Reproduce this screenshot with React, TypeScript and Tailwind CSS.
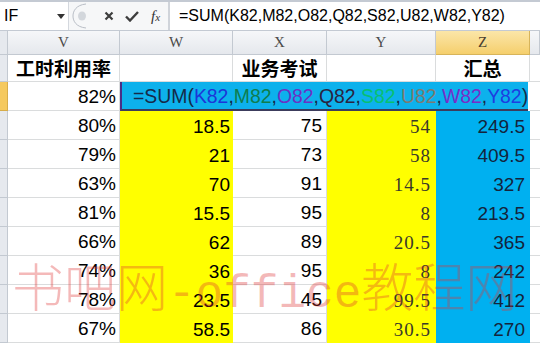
import React from 'react';

const DATA: string[][] = [
  ['80%', '18.5', '75', '54', '249.5'],
  ['79%', '21', '73', '58', '409.5'],
  ['63%', '70', '91', '14.5', '327'],
  ['81%', '15.5', '95', '8', '213.5'],
  ['66%', '62', '89', '20.5', '365'],
  ['74%', '36', '95', '8', '242'],
  ['78%', '23.5', '45', '99.5', '412'],
  ['67%', '58.5', '86', '30.5', '270'],
];

// colour per reference in the formula (on the blue edit box)
const REFS: { t: string; c: string }[] = [
  { t: 'K82', c: 'text-[#1c36d8]' },
  { t: 'M82', c: 'text-[#0f7d4e]' },
  { t: 'O82', c: 'text-[#6a32c4]' },
  { t: 'Q82', c: 'text-[#2a2440]' },
  { t: 'S82', c: 'text-[#08c070]' },
  { t: 'U82', c: 'text-[#7d7a70]' },
  { t: 'W82', c: 'text-[#7a2cc8]' },
  { t: 'Y82', c: 'text-[#1e3ee0]' },
];

const whiteCell = 'border-r border-b border-[#dadcdd] bg-white flex items-center justify-end pt-[3px]';

function FormulaBar() {
  return (
    <div className="h-[31px] flex border-t-[2px] border-b border-[#c4cad3] bg-[#eef0f3] text-[16px] text-black">
      {/* name box */}
      <div className="w-[69px] bg-white flex items-center pl-[4px] pr-[3px] border-r border-[#d4d8de]">
        <span className="flex-1 leading-none">IF</span>
        <svg width="8" height="5" viewBox="0 0 8 5">
          <path d="M0 0 L8 0 L4 5 Z" fill="#333" />
        </svg>
      </div>
      {/* buttons */}
      <div className="w-[99px] bg-[#f6f7f8] flex items-center">
        <svg width="16" height="26" viewBox="0 0 16 26" className="ml-[3px]">
          <path d="M14 1 C4 2 1 8 1 13 C1 18 4 24 14 25" fill="none" stroke="#b9bec6" strokeWidth="1" />
          <ellipse cx="10" cy="13" rx="4" ry="4.5" fill="#d3d7dc" />
        </svg>
        <svg width="10" height="10" viewBox="0 0 10 10" className="ml-[16px]">
          <path d="M1.5 1.5 L8.5 8.5 M8.5 1.5 L1.5 8.5" stroke="#3d3d3d" strokeWidth="2.2" />
        </svg>
        <svg width="14" height="11" viewBox="0 0 14 11" className="ml-[11px]">
          <path d="M1 5.5 L5 9.5 L13 1" fill="none" stroke="#3d3d3d" strokeWidth="2.4" />
        </svg>
        <span className="ml-[12px] font-['Liberation_Serif',serif] italic text-[#333] text-[15px] leading-none">
          f<span className="text-[11px]">x</span>
        </span>
      </div>
      <div className="w-[2px] bg-[#d0d4da]" />
      {/* formula */}
      <div className="flex-1 bg-white flex items-center pl-[9px] font-['Liberation_Sans',sans-serif] whitespace-nowrap">
        =SUM(K82,M82,O82,Q82,S82,U82,W82,Y82)
      </div>
    </div>
  );
}

function ColHeader({ label, active }: { label: string; active?: boolean }) {
  return (
    <div
      className={`flex items-center justify-center border-r border-b font-['Liberation_Serif',serif] text-[15px] ${
        active
          ? 'bg-linear-to-b from-[#fbe6a8] to-[#f5cf6c] border-[#d7b45a] text-[#4a4030]'
          : 'bg-linear-to-b from-[#f6f7f9] to-[#e5e8ed] border-[#c3c9d1] text-[#4a4a4a]'
      }`}
    >
      {label}
    </div>
  );
}

function RowHead({ active }: { active?: boolean }) {
  return (
    <div className={`border-r border-b ${active ? 'bg-[#f5c95e] border-[#d7ad4a]' : 'bg-[#e6e9ee] border-[#c3c9d1]'}`} />
  );
}

export default function App() {
  return (
    <div className="relative w-[540px] h-[346px] overflow-hidden bg-white font-['Liberation_Sans','Noto_Sans_CJK_SC',sans-serif]">
      <FormulaBar />

      <div className="grid grid-cols-[8px_112px_113px_94px_109px_94px_10px] grid-rows-[24px_27px_repeat(9,29px)] text-[19px] text-black">
        {/* column letters */}
        <div className="bg-[#e6e9ee] border-r border-b border-[#c3c9d1]" />
        <ColHeader label="V" />
        <ColHeader label="W" />
        <ColHeader label="X" />
        <ColHeader label="Y" />
        <ColHeader label="Z" active />
        <ColHeader label="" />

        {/* title row */}
        <RowHead />
        <div className="border-r border-b border-[#dadcdd] flex items-center justify-center font-bold font-['Noto_Sans_CJK_SC',sans-serif] text-[19px]">
          工时利用率
        </div>
        <div className="border-r border-b border-[#dadcdd]" />
        <div className="border-r border-b border-[#dadcdd] flex items-center justify-center font-bold font-['Noto_Sans_CJK_SC',sans-serif] text-[19px]">
          业务考试
        </div>
        <div className="border-r border-b border-[#dadcdd]" />
        <div className="border-r border-b border-[#dadcdd] flex items-center justify-center font-bold font-['Noto_Sans_CJK_SC',sans-serif] text-[19px]">
          汇总
        </div>
        <div className="border-b border-[#dadcdd]" />

        {/* row being edited */}
        <RowHead active />
        <div className={`${whiteCell} pr-[3px]`}>82%</div>
        <div className="col-span-4 mr-[2px] bg-[#0db1ec] border-l-2 border-b-2 border-l-[#4a2e86] border-b-[#3c3c5c] flex items-center pl-[11px] pt-[2px] whitespace-nowrap text-[19.4px] text-[#152a48]">
          =SUM(
          {REFS.map((r, i) => (
            <React.Fragment key={r.t}>
              <span className={r.c}>{r.t}</span>
              {i < REFS.length - 1 ? ',' : ')'}
            </React.Fragment>
          ))}
        </div>
        <div className="border-b border-[#dadcdd]" />

        {/* data rows */}
        {DATA.map((row, i) => (
          <React.Fragment key={i}>
            <RowHead />
            <div className={`${whiteCell} pr-[3px]`}>{row[0]}</div>
            <div className="bg-[#ffff00] flex items-center justify-end pr-[3px] pt-[3px]">{row[1]}</div>
            <div className={`${whiteCell} pr-[4px]`}>{row[2]}</div>
            <div className="bg-[#ffff00] flex items-center justify-end pr-[5px] pt-[3px] font-['Liberation_Serif',serif] text-[#3a3a2a] tracking-[1px]">
              {row[3]}
            </div>
            <div className="bg-[#00b0f0] flex items-center justify-end pr-[5px] pt-[3px] text-[#14243c]">{row[4]}</div>
            <div className="border-b border-[#dadcdd]" />
          </React.Fragment>
        ))}
      </div>

      {/* watermark over the sheet */}
      <div className="pointer-events-none absolute left-[12px] top-[259px] flex items-baseline whitespace-nowrap leading-none text-[rgba(222,50,50,0.34)]">
        <span className="font-['Noto_Sans_CJK_SC',serif] font-light text-[52px]">书吧网</span>
        <span className="font-['Liberation_Mono',monospace] text-[46px]">-office</span>
        <span className="font-['Noto_Sans_CJK_SC',serif] font-light text-[52px]">教程网</span>
      </div>
    </div>
  );
}
